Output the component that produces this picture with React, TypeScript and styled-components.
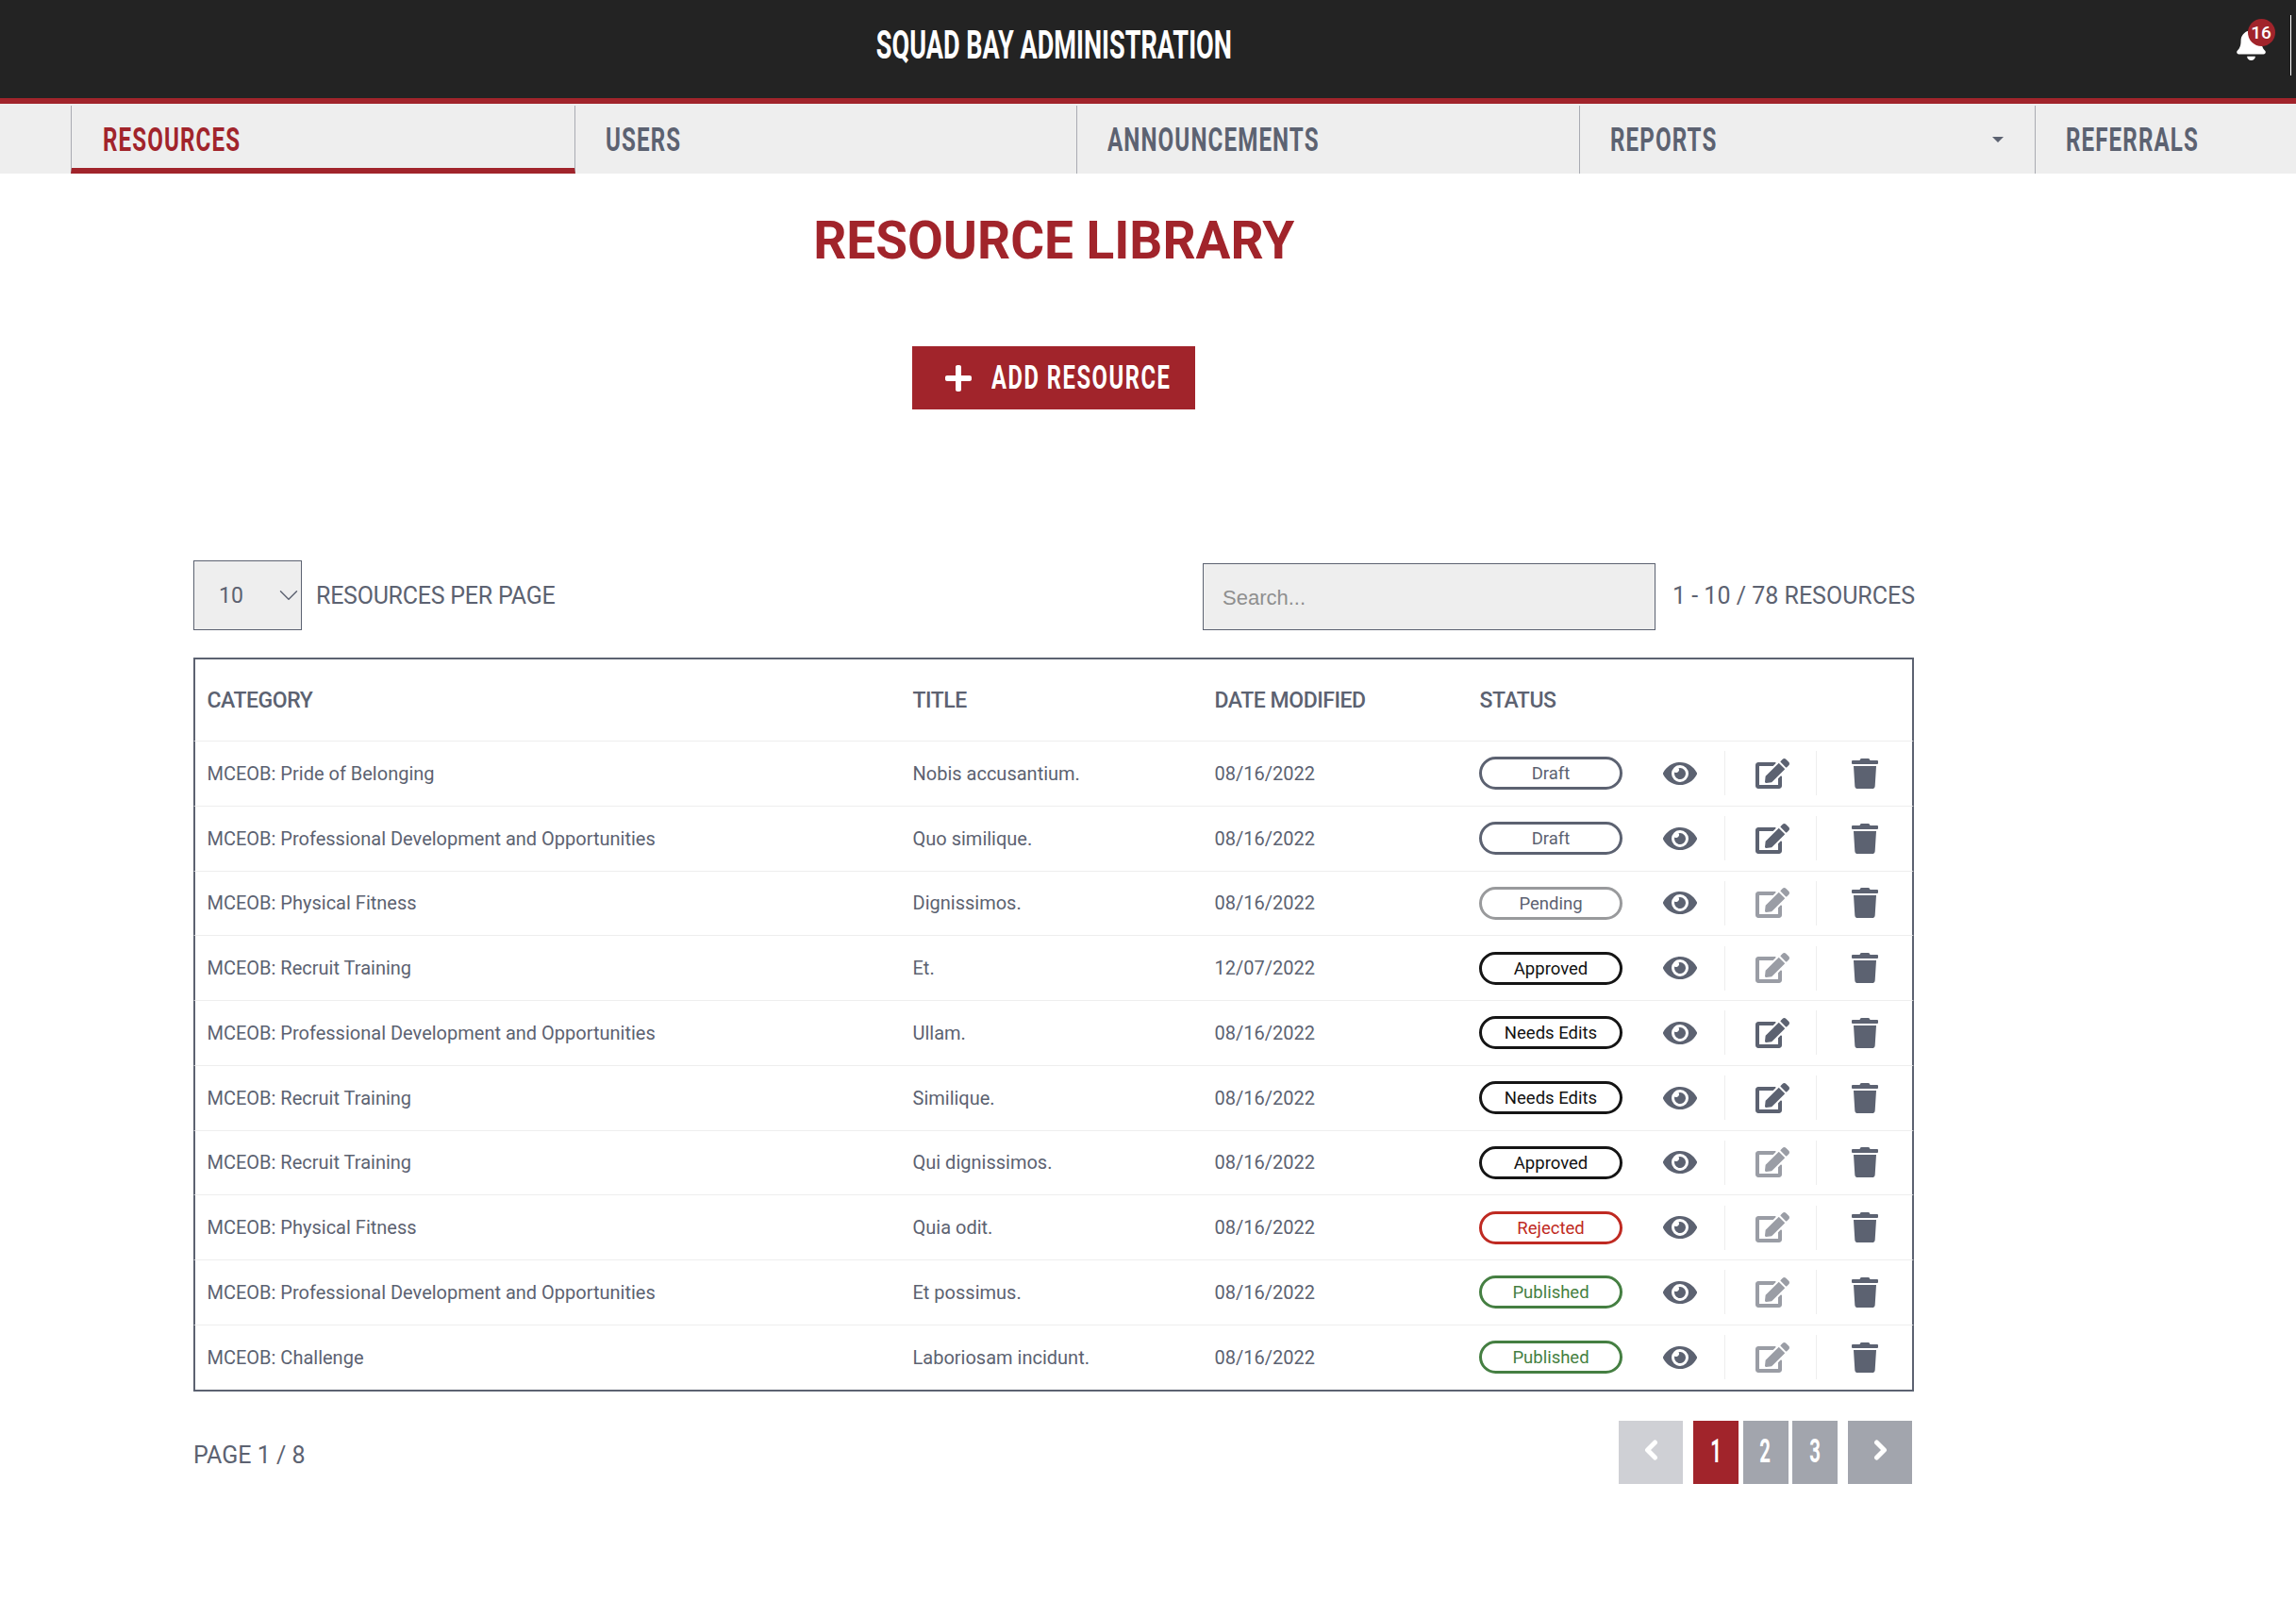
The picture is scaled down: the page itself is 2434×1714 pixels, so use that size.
import React from "react";
import styled, { createGlobalStyle } from "styled-components";
import { FaBell, FaEdit, FaEye, FaPlus, FaTrash } from "react-icons/fa";
import { ChevronDown } from "lucide-react";

const red = "#a1242b";
const slate = "#5c6271";
const body = `Roboto, "Liberation Sans", sans-serif`;

const GlobalStyle = createGlobalStyle`
  html, body {
    margin: 0;
    padding: 0;
    background: #fff;
    font-family: ${body};
    color: ${slate};
  }
  * { box-sizing: border-box; }
`;

const Page = styled.div`
  width: 2434px;
  height: 1714px;
  overflow: hidden;
`;

const Squeezed = styled.span<{ $x: number; $origin?: string }>`
  display: inline-block;
  white-space: nowrap;
  transform: scaleX(${p => p.$x});
  transform-origin: ${p => p.$origin || "left"} center;
`;

const Header = styled.header`
  height: 110px;
  background: #232323;
  border-bottom: 6px solid ${red};
  display: grid;
  grid-template-columns: 205px 1824px 1fr;
`;

const HeaderTitle = styled.h1`
  grid-column: 2;
  margin: 0;
  height: 96px;
  display: flex;
  align-items: center;
  justify-content: center;
  color: #fff;
  font-size: 42px;
  font-weight: 700;
  line-height: 1;
`;

const HeaderActions = styled.div`
  grid-column: 3;
  height: 64px;
  margin-top: 16px;
  padding-right: 5px;
  display: flex;
  align-items: center;
  justify-content: flex-end;
`;

const BellWrap = styled.div`
  position: relative;
  width: 31px;
  height: 36px;
  margin: -3px 26px 0 0;
  color: #fff;
  font-size: 35px;
  display: flex;
  align-items: center;
  justify-content: center;
`;

const BellBadge = styled.span`
  position: absolute;
  top: -9px;
  left: 12px;
  width: 29px;
  height: 29px;
  border-radius: 50%;
  background: ${red};
  color: #fff;
  font-size: 19px;
  font-weight: 500;
  display: flex;
  align-items: center;
  justify-content: center;
`;

const HeaderRule = styled.div`
  width: 1.5px;
  height: 64px;
  background: #fff;
`;

const Nav = styled.nav`
  height: 74px;
  padding: 2px 0 0 75px;
  background: #eee;
  display: flex;
`;

const Tab = styled.a<{ $width: string; $active?: boolean }>`
  position: relative;
  flex: 0 0 ${p => p.$width};
  height: 72px;
  padding: 0 0 0 32px;
  border-right: 1px solid #a9abb2;
  display: flex;
  align-items: center;
  justify-content: space-between;
  color: ${p => (p.$active ? red : slate)};
  font-size: 35px;
  font-weight: 700;
  letter-spacing: 1.6px;
  line-height: 1;
  &:first-child {
    padding-left: 33px;
    border-left: 1px solid #a9abb2;
  }
  &:last-child {
    border-right: none;
  }
  ${p =>
    p.$active &&
    `
    border-bottom: 6px solid ${red};
    padding-top: 6px;
  `}
`;

const Caret = styled.i`
  width: 0;
  height: 0;
  margin-right: 33px;
  border-left: 6px solid transparent;
  border-right: 6px solid transparent;
  border-top: 6.5px solid ${slate};
`;

const Main = styled.main`
  width: 1824px;
  margin-left: 205px;
  display: flex;
  flex-direction: column;
`;

const Title = styled.h2`
  margin: 42px 0 0;
  height: 58px;
  color: ${red};
  font-size: 56px;
  font-weight: 700;
  line-height: 58px;
  text-align: center;
`;

const AddButton = styled.button`
  align-self: center;
  width: 300px;
  height: 67px;
  margin-top: 83px;
  padding: 0 0 0 33px;
  border: none;
  background: ${red};
  color: #fff;
  font-family: inherit;
  font-size: 35px;
  font-weight: 700;
  line-height: 1;
  letter-spacing: 2.2px;
  display: flex;
  align-items: center;
  gap: 19px;
  svg {
    flex: none;
    font-size: 32px;
  }
`;

const Toolbar = styled.div`
  height: 74px;
  margin-top: 160px;
  display: flex;
  align-items: center;
`;

const PerPage = styled.div`
  width: 115px;
  height: 74px;
  padding: 0 0 0 26px;
  border: 1.5px solid ${slate};
  background: #eee;
  font-size: 23px;
  display: flex;
  align-items: center;
  justify-content: space-between;
  svg {
    margin-right: -4px;
  }
`;

const ToolbarText = styled.span`
  font-size: 25px;
  white-space: nowrap;
`;

const PerPageLabel = styled(ToolbarText)`
  margin-left: 15px;
  letter-spacing: -0.25px;
`;

const Search = styled.input`
  width: 480px;
  height: 71.5px;
  margin-left: auto;
  margin-top: 3px;
  padding: 2px 20px 0;
  border: 1.5px solid ${slate};
  border-radius: 0;
  background: #eee;
  font-family: "Liberation Sans", sans-serif;
  font-size: 22px;
  &::placeholder {
    color: #8f8f8f;
    opacity: 1;
  }
`;

const Count = styled(ToolbarText)`
  width: 256px;
  margin-left: 18px;
`;

const Table = styled.div`
  margin-top: 29px;
  border-top: 2px solid ${slate};
  border-bottom: 2px solid ${slate};
`;

const columns = "748px 320px 281px 177px 95px 97px 1fr";

const HeadRow = styled.div`
  height: 86px;
  border-left: 2px solid ${slate};
  border-right: 2px solid ${slate};
  display: grid;
  grid-template-columns: ${columns};
  align-items: center;
  font-size: 23px;
  font-weight: 500;
  letter-spacing: -0.45px;
`;

const Row = styled.div`
  height: 68.75px;
  border-left: 2px solid ${slate};
  border-right: 2px solid ${slate};
  border-top: 1.5px solid #eee;
  display: grid;
  grid-template-columns: ${columns};
  align-items: center;
  font-size: 20px;
`;

const Cell = styled.div`
  padding-left: 12.5px;
  white-space: nowrap;
`;

const StatusCell = styled.div`
  padding-left: 12px;
`;

const statusStyle: Record<string, { border: string; color: string }> = {
  Draft: { border: slate, color: slate },
  Pending: { border: "#999a9c", color: slate },
  Approved: { border: "#151515", color: "#111" },
  "Needs Edits": { border: "#151515", color: "#111" },
  Rejected: { border: "#bf2a22", color: "#bf2a22" },
  Published: { border: "#457f42", color: "#457f42" },
};

const Pill = styled.div<{ $status: string }>`
  width: 152px;
  height: 35px;
  padding-top: 1px;
  border-radius: 18px;
  border: 3px solid ${p => statusStyle[p.$status].border};
  color: ${p => statusStyle[p.$status].color};
  font-size: 18.5px;
  display: flex;
  align-items: center;
  justify-content: center;
`;

const IconCell = styled.div<{ $rule?: boolean; $muted?: boolean; $size: number; $shift?: number }>`
  height: 47px;
  padding-left: ${p => p.$shift || 0}px;
  border-left: ${p => (p.$rule ? "1.5px solid #eee" : "none")};
  color: ${p => (p.$muted ? "#9a9da5" : slate)};
  font-size: ${p => p.$size}px;
  display: flex;
  align-items: center;
  justify-content: center;
`;

const Footer = styled.div`
  margin-top: 31.5px;
  display: flex;
  align-items: flex-start;
  justify-content: space-between;
`;

const PageLabel = styled.span`
  margin-top: 22px;
  font-size: 25px;
`;

const Pager = styled.div`
  display: flex;
  height: 67px;
  margin-right: 2px;
`;

const PagerNumbers = styled.div`
  display: flex;
  gap: 4.5px;
  margin: 0 11px;
`;

const PagerArrow = styled.button<{ $disabled?: boolean }>`
  width: 68px;
  height: 67px;
  border: none;
  padding: 0 0 5px;
  background: ${p => (p.$disabled ? "#cfd0d5" : "#a2a5ad")};
  color: #fff;
  display: flex;
  align-items: center;
  justify-content: center;
`;

const PagerNumber = styled.button<{ $active?: boolean }>`
  width: 48px;
  height: 67px;
  border: none;
  padding: 0 0 2px;
  background: ${p => (p.$active ? red : "#a2a5ad")};
  color: #fff;
  font-family: inherit;
  font-size: 35px;
  font-weight: 700;
  display: flex;
  align-items: center;
  justify-content: center;
`;

const Chevron = ({ points }: { points: string }) => (
  <svg width="15" height="22" viewBox="0 0 15 22" fill="none" stroke="currentColor" strokeWidth="5" strokeLinecap="round" strokeLinejoin="round">
    <polyline points={points} />
  </svg>
);

type Resource = {
  category: string;
  title: string;
  date: string;
  status: string;
};

const dev = "MCEOB: Professional Development and Opportunities";

const resources: Resource[] = [
  { category: "MCEOB: Pride of Belonging", title: "Nobis accusantium.", date: "08/16/2022", status: "Draft" },
  { category: dev, title: "Quo similique.", date: "08/16/2022", status: "Draft" },
  { category: "MCEOB: Physical Fitness", title: "Dignissimos.", date: "08/16/2022", status: "Pending" },
  { category: "MCEOB: Recruit Training", title: "Et.", date: "12/07/2022", status: "Approved" },
  { category: dev, title: "Ullam.", date: "08/16/2022", status: "Needs Edits" },
  { category: "MCEOB: Recruit Training", title: "Similique.", date: "08/16/2022", status: "Needs Edits" },
  { category: "MCEOB: Recruit Training", title: "Qui dignissimos.", date: "08/16/2022", status: "Approved" },
  { category: "MCEOB: Physical Fitness", title: "Quia odit.", date: "08/16/2022", status: "Rejected" },
  { category: dev, title: "Et possimus.", date: "08/16/2022", status: "Published" },
  { category: "MCEOB: Challenge", title: "Laboriosam incidunt.", date: "08/16/2022", status: "Published" },
];

const tabs = [
  { label: "RESOURCES", width: "535px", active: true },
  { label: "USERS", width: "532px" },
  { label: "ANNOUNCEMENTS", width: "533px" },
  { label: "REPORTS", width: "483px", caret: true },
  { label: "REFERRALS", width: "276px" },
];

const editable = (status: string) => status === "Draft" || status === "Needs Edits";

export default function App() {
  return (
    <Page>
      <GlobalStyle />
      <Header>
        <HeaderTitle>
          <Squeezed $x={0.645} $origin="center">SQUAD BAY ADMINISTRATION</Squeezed>
        </HeaderTitle>
        <HeaderActions>
          <BellWrap>
            <FaBell />
            <BellBadge>16</BellBadge>
          </BellWrap>
          <HeaderRule />
        </HeaderActions>
      </Header>
      <Nav>
        {tabs.map(tab => (
          <Tab key={tab.label} $width={tab.width} $active={tab.active}>
            <Squeezed $x={0.69}>{tab.label}</Squeezed>
            {tab.caret && <Caret />}
          </Tab>
        ))}
      </Nav>
      <Main>
        <Title>
          <Squeezed $x={0.98} $origin="center">RESOURCE LIBRARY</Squeezed>
        </Title>
        <AddButton>
          <FaPlus />
          <Squeezed $x={0.68}>ADD RESOURCE</Squeezed>
        </AddButton>
        <Toolbar>
          <PerPage>
            10
            <ChevronDown size={34} strokeWidth={1} />
          </PerPage>
          <PerPageLabel>RESOURCES PER PAGE</PerPageLabel>
          <Search placeholder="Search..." />
          <Count>1 - 10 / 78 RESOURCES</Count>
        </Toolbar>
        <Table>
          <HeadRow>
            <Cell>CATEGORY</Cell>
            <Cell>TITLE</Cell>
            <Cell>DATE MODIFIED</Cell>
            <Cell>STATUS</Cell>
          </HeadRow>
          {resources.map((r, i) => (
            <Row key={i}>
              <Cell>{r.category}</Cell>
              <Cell>{r.title}</Cell>
              <Cell>{r.date}</Cell>
              <StatusCell>
                <Pill $status={r.status}>{r.status}</Pill>
              </StatusCell>
              <IconCell $size={36}>
                <FaEye />
              </IconCell>
              <IconCell $rule $size={36} $shift={3} $muted={!editable(r.status)}>
                <FaEdit />
              </IconCell>
              <IconCell $rule $size={32}>
                <FaTrash />
              </IconCell>
            </Row>
          ))}
        </Table>
        <Footer>
          <PageLabel>PAGE 1 / 8</PageLabel>
          <Pager>
            <PagerArrow $disabled>
              <Chevron points="11.5,3 3.5,11 11.5,19" />
            </PagerArrow>
            <PagerNumbers>
              <PagerNumber $active>
                <Squeezed $x={0.58} $origin="center">1</Squeezed>
              </PagerNumber>
              <PagerNumber>
                <Squeezed $x={0.58} $origin="center">2</Squeezed>
              </PagerNumber>
              <PagerNumber>
                <Squeezed $x={0.58} $origin="center">3</Squeezed>
              </PagerNumber>
            </PagerNumbers>
            <PagerArrow>
              <Chevron points="3.5,3 11.5,11 3.5,19" />
            </PagerArrow>
          </Pager>
        </Footer>
      </Main>
    </Page>
  );
}
